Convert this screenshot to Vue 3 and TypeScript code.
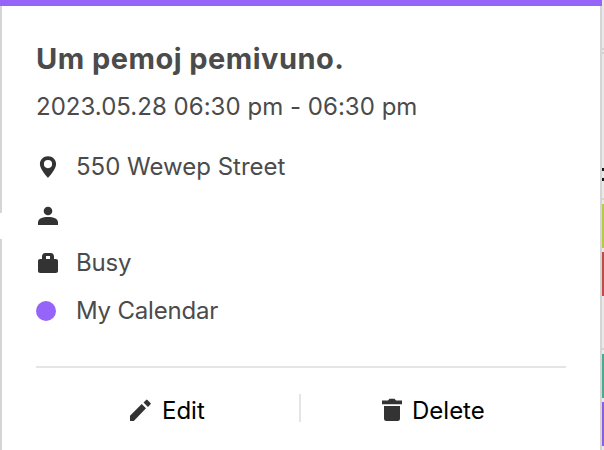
<script setup lang="ts">
const event = {
  title: 'Um pemoj pemivuno.',
  time: '2023.05.28 06:30 pm - 06:30 pm',
  location: '550 Wewep Street',
  state: 'Busy',
  calendar: 'My Calendar',
}
</script>

<template>
  <main class="page">
    <section class="popup">
      <div class="top-line"></div>
      <div class="container">
        <header class="header">
          <h1 class="title">{{ event.title }}</h1>
          <p class="time">{{ event.time }}</p>
        </header>
        <div class="details">
          <div class="row location">
            <svg class="icon" viewBox="0 0 24 24">
              <path fill-rule="evenodd" d="M12 1.200C7.400 1.200 3.900 4.600 3.900 9c0 5.400 8.100 14 8.100 14s8.100-8.600 8.100-14C20.100 4.600 16.600 1.200 12 1.200Zm0 3.800a4.100 4.100 0 1 1 0 8.200A4.100 4.100 0 0 1 12 5Z" />
            </svg>
            <span>{{ event.location }}</span>
          </div>
          <div class="row attendees">
            <svg class="icon" viewBox="0 0 24 24">
              <circle cx="12" cy="8" r="4.300" />
              <path d="M2 22v-2.500C2 15.700 6.400 14 12 14s10 1.700 10 5.500V22Z" />
            </svg>
          </div>
          <div class="row state">
            <svg class="icon" viewBox="0 0 24 24">
              <path fill-rule="evenodd" d="M6 8V5.500C6 3.600 7.300 2 9.200 2h5.600C16.700 2 18 3.600 18 5.500V8h1.800c1.400 0 2.200.8 2.200 2.200v9.600c0 1.400-.8 2.200-2.200 2.200H4.200C2.800 22 2 21.200 2 19.800v-9.600C2 8.800 2.800 8 4.200 8Zm4 0h4V5h-4Z" />
            </svg>
            <span>{{ event.state }}</span>
          </div>
          <div class="row calendar">
            <i class="dot"></i>
            <span>{{ event.calendar }}</span>
          </div>
        </div>
        <footer class="actions">
          <button class="action edit" type="button">
            <svg class="action-icon pencil" viewBox="0 0 24 24">
              <path d="M2 17.800 13.700 6l4.300 4.300L5.800 23H2ZM15.500 4.500l2.600-2.600q.7-.7 1.400 0l3 3q.7.7 0 1.400L20 9Z" />
            </svg>
            <span>Edit</span>
          </button>
          <button class="action delete" type="button">
            <svg class="action-icon" viewBox="0 0 24 24">
              <path d="M2 2.500h6l1.500-1.700h5L16 2.500h6v3.700H2ZM4 8h16v12.700q0 2.300-2.300 2.300H6.300Q4 23 4 20.700Z" />
            </svg>
            <span>Delete</span>
          </button>
        </footer>
      </div>
    </section>
    <aside class="schedule">
      <i class="rule first"></i>
      <i class="rule second"></i>
      <i class="mark first-mark"></i>
      <i class="mark second-mark"></i>
      <i class="rule third"></i>
      <i class="event olive"></i>
      <i class="event red"></i>
      <i class="rule fourth"></i>
      <i class="event teal"></i>
      <i class="event violet"></i>
    </aside>
    <span class="arrow"></span>
  </main>
</template>

<style>
body {
  margin: 0;
  overflow: hidden;
}
</style>

<style scoped>
* {
  box-sizing: border-box;
}
.page {
  position: relative;
  display: flex;
  width: 604px;
  height: 450px;
  background: #fff;
  font-family: Inter, "Liberation Sans", sans-serif;
  color: #4b4b4b;
}
.popup {
  width: 602px;
  height: 450px;
}
.top-line {
  height: 6px;
  background: #9664f8;
}
.container {
  height: 444px;
  padding: 32px 34px 0;
  border: solid #d5d5d5;
  border-width: 0 2px;
}
.header {
  height: 105px;
}
.title {
  margin: 0;
  font-size: 29px;
  line-height: 42px;
  font-weight: 700;
  letter-spacing: 0.47px;
  white-space: nowrap;
}
.time {
  margin: 6px 0 0;
  font-size: 24px;
  line-height: 42px;
  letter-spacing: 0.03px;
  white-space: nowrap;
}
.details {
  height: 223px;
  font-size: 24px;
}
.row {
  display: flex;
  align-items: center;
  height: 48px;
}
.row span {
  padding-bottom: 2px;
}
.state span,
.calendar span {
  letter-spacing: -0.2px;
}
.icon {
  width: 24px;
  height: 24px;
  margin-right: 16px;
  fill: #333;
  filter: blur(0.4px);
}
.dot {
  width: 20px;
  height: 20px;
  margin-right: 20px;
  border-radius: 50%;
  background: #9664f8;
}
.actions {
  position: relative;
  display: flex;
  height: 78px;
  border-top: 2px solid #e5e5e5;
}
.actions::after {
  content: "";
  position: absolute;
  left: 263px;
  top: 26px;
  width: 2px;
  height: 28px;
  background: #e5e5e5;
}
.action {
  display: flex;
  align-items: center;
  width: 264px;
  height: 84px;
  padding: 0 0 0 92px;
  border: 0;
  background: none;
  color: #000;
  font: 24px Inter, "Liberation Sans", sans-serif;
}
.delete {
  padding-left: 80px;
}
.action-icon {
  width: 24px;
  height: 24px;
  margin-right: 10px;
  fill: #333;
  filter: blur(0.4px);
}
.delete .action-icon {
  margin-right: 8px;
}
.schedule {
  display: flex;
  flex-direction: column;
  width: 2px;
  height: 450px;
  background: #e9e9e9;
}
.rule {
  height: 2px;
  background: #d2d2d2;
}
.first {
  margin-top: 48px;
}
.second {
  margin-top: 2px;
}
.mark {
  height: 3px;
  background: #151515;
}
.first-mark {
  margin-top: 114px;
}
.second-mark {
  margin-top: 7px;
}
.third {
  margin-top: 17px;
}
.event {
  height: 44px;
}
.olive {
  margin-top: 4px;
  background: #b6cc48;
}
.red {
  margin-top: 4px;
  background: #bd4d46;
}
.fourth {
  margin-top: 52px;
}
.teal {
  margin-top: 4px;
  background: #50aa91;
}
.violet {
  margin-top: 4px;
  background: #8d5ddf;
}
.arrow {
  position: absolute;
  left: 0;
  top: 213px;
  width: 2px;
  height: 26px;
  background: #fff;
}
</style>
